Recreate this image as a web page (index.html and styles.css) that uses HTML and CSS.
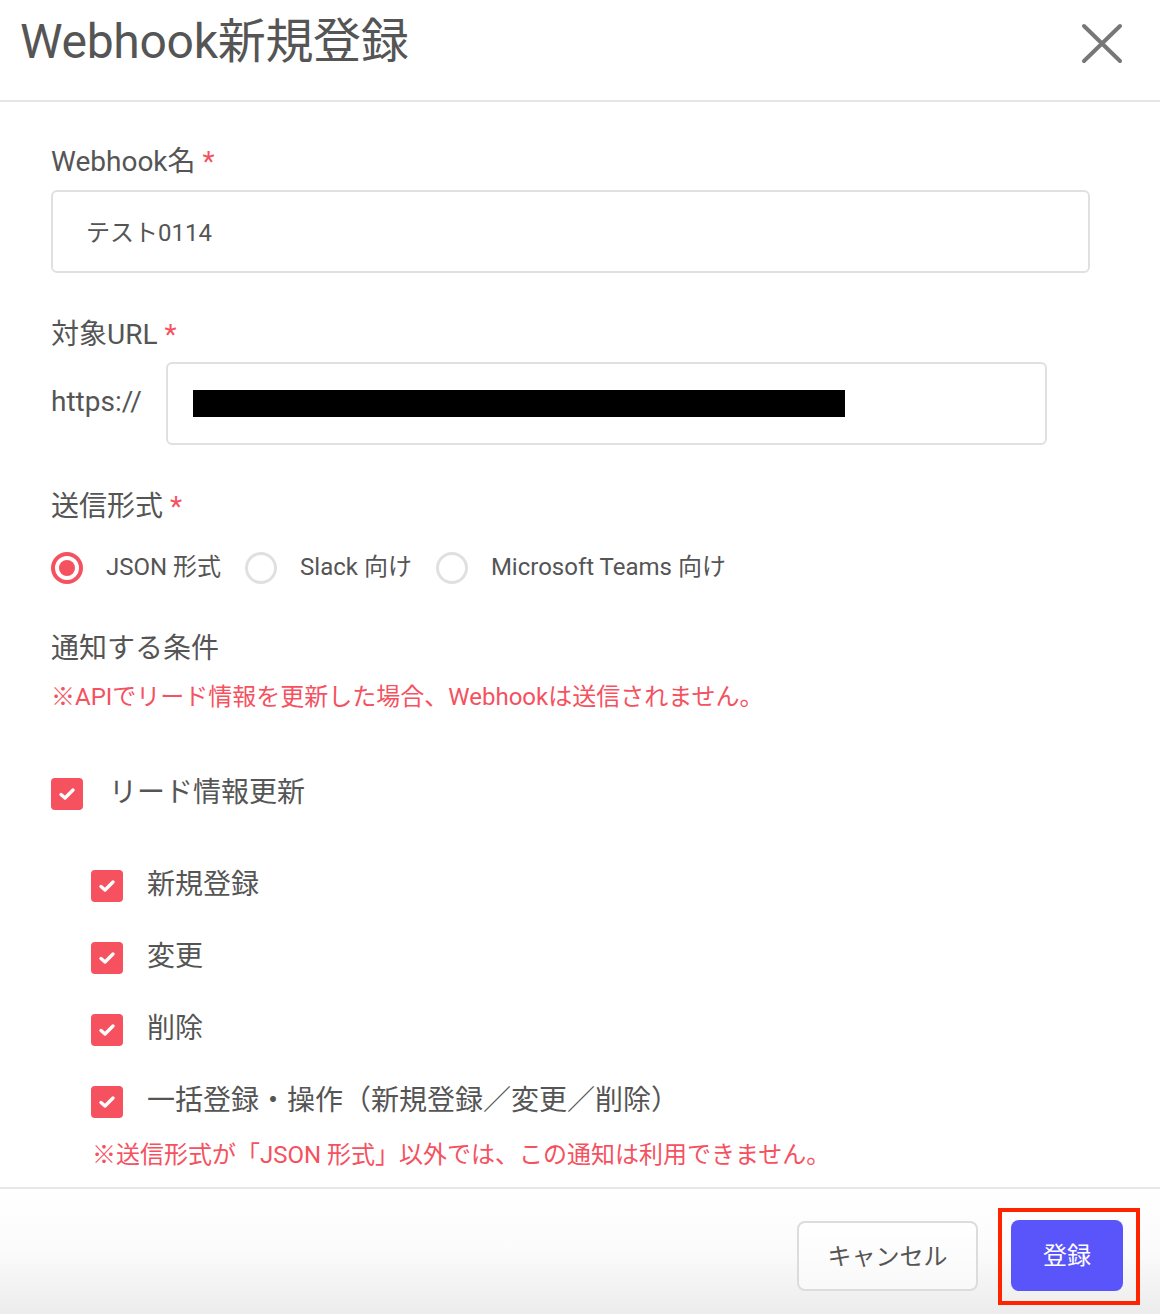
FILE: index.html
```html
<!DOCTYPE html>
<html lang="ja">
<head>
<meta charset="utf-8">
<title>Webhook新規登録</title>
<link rel="stylesheet" href="styles.css">
</head>
<body>
<div class="modal">
  <header class="modal-header">
    <h1 class="modal-title">Webhook新規登録</h1>
    <button class="close-btn" aria-label="閉じる">
      <svg width="44" height="44" viewBox="0 0 44 44"><path d="M4 4 L40 39 M40 4 L4 39" stroke="#777" stroke-width="4" stroke-linecap="round" fill="none"/></svg>
    </button>
  </header>

  <main class="modal-body">
    <div class="field field-name">
      <div class="label">Webhook名 <span class="req">*</span></div>
      <div class="input input-name">テスト0114</div>
    </div>

    <div class="field field-url">
      <div class="label">対象URL <span class="req">*</span></div>
      <div class="url-row">
        <span class="url-prefix">https://</span>
        <div class="input input-url"><span class="redact"></span></div>
      </div>
    </div>

    <div class="field field-format">
      <div class="label">送信形式 <span class="req">*</span></div>
      <div class="radio-row">
        <label class="radio"><span class="radio-dot checked"></span><span class="radio-text">JSON 形式</span></label>
        <label class="radio"><span class="radio-dot"></span><span class="radio-text">Slack 向け</span></label>
        <label class="radio"><span class="radio-dot"></span><span class="radio-text">Microsoft Teams 向け</span></label>
      </div>
    </div>

    <div class="field field-cond">
      <div class="label">通知する条件</div>
      <div class="note">※APIでリード情報を更新した場合、Webhookは送信されません。</div>
    </div>

    <div class="check-row top-check">
      <span class="checkbox"><svg width="18" height="14" viewBox="0 0 18 14"><path d="M3 7.5 L7 11 L15 3" stroke="#fff" stroke-width="3.4" stroke-linecap="round" stroke-linejoin="round" fill="none"/></svg></span>
      <span class="check-label">リード情報更新</span>
    </div>

    <div class="sub-checks">
      <div class="check-row sub">
        <span class="checkbox"><svg width="18" height="14" viewBox="0 0 18 14"><path d="M3 7.5 L7 11 L15 3" stroke="#fff" stroke-width="3.4" stroke-linecap="round" stroke-linejoin="round" fill="none"/></svg></span>
        <span class="check-label">新規登録</span>
      </div>
      <div class="check-row sub">
        <span class="checkbox"><svg width="18" height="14" viewBox="0 0 18 14"><path d="M3 7.5 L7 11 L15 3" stroke="#fff" stroke-width="3.4" stroke-linecap="round" stroke-linejoin="round" fill="none"/></svg></span>
        <span class="check-label">変更</span>
      </div>
      <div class="check-row sub">
        <span class="checkbox"><svg width="18" height="14" viewBox="0 0 18 14"><path d="M3 7.5 L7 11 L15 3" stroke="#fff" stroke-width="3.4" stroke-linecap="round" stroke-linejoin="round" fill="none"/></svg></span>
        <span class="check-label">削除</span>
      </div>
      <div class="check-row sub">
        <span class="checkbox"><svg width="18" height="14" viewBox="0 0 18 14"><path d="M3 7.5 L7 11 L15 3" stroke="#fff" stroke-width="3.4" stroke-linecap="round" stroke-linejoin="round" fill="none"/></svg></span>
        <span class="check-label">一括登録・操作（新規登録／変更／削除）</span>
      </div>
      <div class="note note-sub">※送信形式が「JSON 形式」以外では、この通知は利用できません。</div>
    </div>
  </main>

  <footer class="modal-footer">
    <button class="btn btn-cancel">キャンセル</button>
    <div class="primary-wrap">
      <button class="btn btn-primary">登録</button>
      <span class="highlight"></span>
    </div>
  </footer>
</div>
</body>
</html>
```

FILE: styles.css
```css
* { box-sizing: border-box; }

html, body {
  margin: 0;
  padding: 0;
  background: #fff;
}

body {
  font-family: Roboto, "Noto Sans CJK JP", sans-serif;
  color: #555;
}

.modal {
  width: 1160px;
  height: 1314px;
  display: flex;
  flex-direction: column;
  overflow: hidden;
  background: #fff;
}

.modal-header {
  height: 102px;
  flex: none;
  display: flex;
  align-items: flex-start;
  justify-content: space-between;
  border-bottom: 2px solid #e6e6e6;
  padding: 14px 36px 0 20px;
}

.modal-title {
  margin: 0;
  font-size: 48px;
  font-weight: 400;
  line-height: 56px;
  color: #555;
  letter-spacing: -0.3px;
}

.close-btn {
  border: 0;
  background: none;
  padding: 0;
  margin-top: 8px;
  width: 44px;
  height: 44px;
  cursor: pointer;
}

.modal-body {
  flex: 1;
  padding: 40px 51px 0 51px;
}

.field-name { margin-bottom: 42px; }
.field-url { margin-bottom: 42px; }
.field-format { margin-bottom: 41px; }

.label {
  font-size: 28px;
  line-height: 40px;
  color: #555;
}

.req { color: #f5515f; }

.input {
  border: 2px solid #e0e0e0;
  border-radius: 6px;
  height: 83px;
  display: flex;
  align-items: center;
  font-size: 24px;
  color: #555;
  background: #fff;
}

.input-name {
  margin-top: 8px;
  width: 1039px;
  padding-left: 33px;
  padding-bottom: 2px;
}

.url-row {
  margin-top: 7px;
  display: flex;
  align-items: center;
}

.url-prefix {
  font-size: 28px;
  width: 115px;
  flex: none;
  margin-top: -4px;
}

.input-url {
  width: 881px;
  padding-left: 25px;
}

.redact {
  display: block;
  width: 652px;
  height: 27px;
  background: #000;
}

.radio-row {
  margin-top: 21px;
  display: flex;
  align-items: center;
  gap: 24px;
  height: 40px;
}

.radio {
  display: flex;
  align-items: center;
  gap: 23px;
  font-size: 24px;
  color: #555;
  line-height: 32px;
}

.radio-text { margin-top: -2px; }

.radio-dot {
  width: 32px;
  height: 32px;
  border-radius: 50%;
  border: 3px solid #e0e0e0;
  flex: none;
  position: relative;
}

.radio-dot.checked {
  border: 4px solid #f5515f;
}

.radio-dot.checked::after {
  content: "";
  position: absolute;
  left: 4px;
  top: 4px;
  width: 16px;
  height: 16px;
  border-radius: 50%;
  background: #f5515f;
}

.note {
  margin-top: 10px;
  font-size: 24px;
  line-height: 36px;
  color: #f5515f;
}

.check-row {
  display: flex;
  align-items: center;
  height: 40px;
}

.top-check {
  margin-top: 59px;
  gap: 26px;
}

.checkbox {
  width: 32px;
  height: 32px;
  border-radius: 4px;
  background: #f5515f;
  display: flex;
  align-items: center;
  justify-content: center;
  flex: none;
}

.check-label {
  font-size: 28px;
  color: #555;
  line-height: 40px;
  margin-top: -3px;
}

.sub-checks {
  margin-top: 52px;
  padding-left: 40px;
  display: flex;
  flex-direction: column;
  gap: 32px;
}

.check-row.sub { gap: 24px; }

.note.note-sub {
  margin-top: -17px;
  padding-left: 1px;
}

.modal-footer {
  height: 127px;
  flex: none;
  border-top: 2px solid #e6e9ec;
  background: linear-gradient(#ffffff 0%, #fbfbfb 50%, #ececec 100%);
  display: flex;
  justify-content: flex-end;
  align-items: flex-start;
  padding: 32px 37px 0 0;
  gap: 33px;
}

.btn {
  font-family: Roboto, "Noto Sans CJK JP", sans-serif;
  font-size: 24px;
  border-radius: 8px;
  cursor: pointer;
  padding: 0 0 4px 0;
}

.btn-cancel {
  width: 181px;
  height: 70px;
  border: 2px solid #dcdcdc;
  background: linear-gradient(#ffffff, #f9f9f9);
  color: #555;
}

.primary-wrap {
  position: relative;
}

.btn-primary {
  margin-top: -1px;
  width: 112px;
  height: 71px;
  border: 0;
  background: #5a55fb;
  color: #fff;
}

.highlight {
  position: absolute;
  left: -13px;
  top: -13px;
  width: 142px;
  height: 97px;
  border: 4px solid #ff2400;
  pointer-events: none;
}
```
